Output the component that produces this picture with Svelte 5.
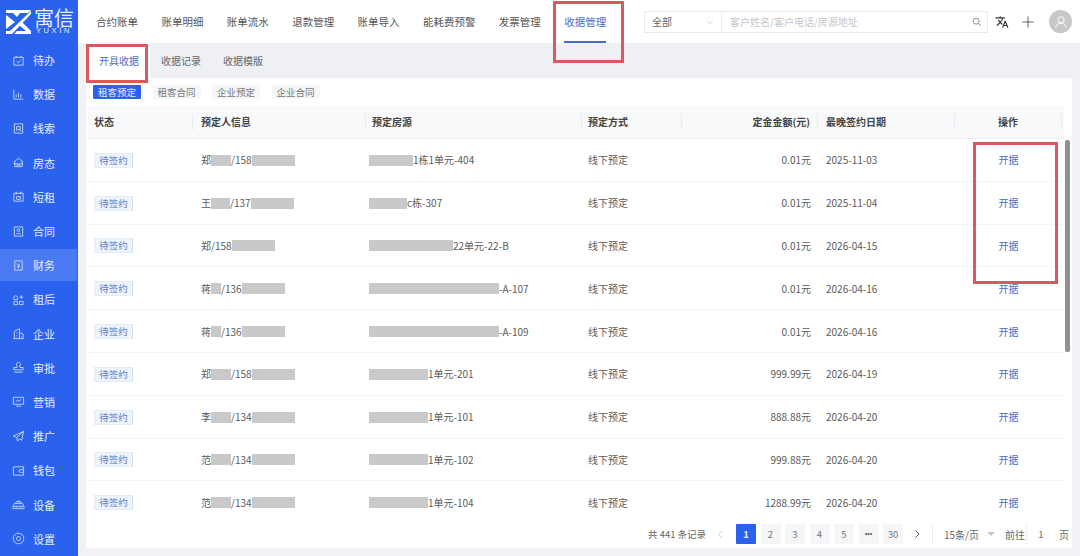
<script lang="ts">
  const icons: Record<string, string> = {
    待办: "M2 3.5h10v8.5H2zM4.5 2v2.5M9.5 2v2.5M5 8l1.6 1.5L9.2 6.8",
    数据: "M2 2v10h10M4.5 10V7M7 10V5M9.5 10V6.5",
    线索: "M2.5 2h9v10h-9zM5 5h4v3H5zM8 9.5h2M4.5 9.5h1",
    房态: "M2 6.5 7 2.5l5 4M3 6v5.5h8V6M2 8.5h10M5.5 11.5v-2h3v2",
    短租: "M2 3.5h10v8.5H2zM4.5 1.8v3M9.5 1.8v3M5 7h4v3H5z",
    合同: "M2.5 2h9v10h-9zM5.5 5.5a1.5 1.5 0 1 0 3 0 1.5 1.5 0 1 0-3 0M4.5 10c.5-1.3 4.5-1.3 5 0",
    财务: "M3 2h8v10H3zM5.5 5 7 6.8 8.5 5M7 6.8V10M5.5 8h3",
    租后: "M2 5a2 2 0 1 1 4 0v2H2zM8 4.5h4M10 2.5v4M2 9h4v3.5H2zM8 9h4v3.5H8z",
    企业: "M2.5 12.5V4.5L8 2v10.5M8 6l4 1.5v5M1.5 12.5h11M5 6v1M5 9v1M10 9.5v1",
    审批: "M7 1.5a2.2 2.2 0 0 1 1.5 3.8V7H12v2.5H2V7h3.5V5.3A2.2 2.2 0 0 1 7 1.5zM2.5 12h9",
    营销: "M1.5 2.5h11v7.5h-11zM4.5 12h5M4 7.5l2-2 1.5 1.2L10 4.5",
    推广: "M12.5 1.5 1.5 6.5l3.5 1.5 1 4 2-2.5 2.5 1.5zM5 8l7.5-6.5",
    钱包: "M1.5 3h11v9h-11zM12.5 6H9a1.5 1.5 0 0 0 0 3h3.5",
    设备: "M1.5 9a5.5 5 0 0 1 11 0zM1 9v2.5h12V9M3.5 6h7M5 3.5h4M4 10.2h1M9 10.2h1",
    设置: "M7 1.3A5.7 5.7 0 1 0 7 12.7 5.7 5.7 0 1 0 7 1.3zM7 4.8a2.2 2.2 0 1 0 0 4.4 2.2 2.2 0 1 0 0-4.4z",
  };
  const navItems = Object.keys(icons);
  const topTabs = ["合约账单", "账单明细", "账单流水", "退款管理", "账单导入", "能耗费预警", "发票管理", "收据管理"];
  const subTabs = ["开具收据", "收据记录", "收据模版"];
  const chips = ["租客预定", "租客合同", "企业预定", "企业合同"];
  const pages = ["1", "2", "3", "4", "5", "•••", "30"];

  const rows = [
    { name: "郑", nameGap: 20, phone: "158", tail: 43, roomGap: 44, room: "1栋1单元-404", amount: "0.01元", date: "2025-11-03" },
    { name: "王", nameGap: 19, phone: "137", tail: 43, roomGap: 38, room: "c栋-307", amount: "0.01元", date: "2025-11-04" },
    { name: "郑", nameGap: 0, phone: "158", tail: 43, roomGap: 84, room: "22单元-22-B", amount: "0.01元", date: "2026-04-15" },
    { name: "蒋", nameGap: 10, phone: "136", tail: 43, roomGap: 130, room: "-A-107", amount: "0.01元", date: "2026-04-16" },
    { name: "蒋", nameGap: 10, phone: "136", tail: 43, roomGap: 130, room: "-A-109", amount: "0.01元", date: "2026-04-16" },
    { name: "郑", nameGap: 20, phone: "158", tail: 43, roomGap: 59, room: "1单元-201", amount: "999.99元", date: "2026-04-19" },
    { name: "李", nameGap: 20, phone: "134", tail: 43, roomGap: 59, room: "1单元-101", amount: "888.88元", date: "2026-04-20" },
    { name: "范", nameGap: 20, phone: "134", tail: 43, roomGap: 59, room: "1单元-102", amount: "999.88元", date: "2026-04-20" },
    { name: "范", nameGap: 20, phone: "134", tail: 43, roomGap: 59, room: "1单元-104", amount: "1288.99元", date: "2026-04-20" },
  ];
</script>

<div class="app">
  <aside class="sidebar">
    <div class="logo">
      <svg class="logo-mark" viewBox="0 0 25 24" width="25" height="24" aria-hidden="true">
        <path fill="#fff" d="M0 0h25l-3 3H14L11 7 7 3H0zM0 5l9 7-9 7zM25 1v3L6 24H0v-3h4zM13 15l3-3 9 9v3H8l3-3h9z" />
      </svg>
      <div class="logo-text">
        <span class="logo-cn">寓信</span>
        <span class="logo-en">YUXIN</span>
      </div>
    </div>
    <nav>
      {#each navItems as item}
        <div class="nav-item" class:active={item === "财务"}>
          <svg viewBox="0 0 14 14" width="13" height="13" aria-hidden="true">
            <path d={icons[item]} />
          </svg>
          <span>{item}</span>
        </div>
      {/each}
    </nav>
  </aside>

  <div class="main">
    <header class="topbar">
      <div class="top-tabs">
        {#each topTabs as tab}
          <span class="top-tab" class:active={tab === "收据管理"}>{tab}</span>
        {/each}
      </div>
      <div class="search">
        <div class="select">
          <span>全部</span>
          <svg viewBox="0 0 10 10" width="8" height="8" aria-hidden="true"><path d="M1.5 3.5 5 7l3.5-3.5" /></svg>
        </div>
        <div class="input">
          <span>客户姓名/客户电话/房源地址</span>
          <svg viewBox="0 0 12 12" width="10" height="10" aria-hidden="true"><circle cx="5" cy="5" r="3.6" /><path d="m7.8 7.8 3 3" /></svg>
        </div>
      </div>
      <svg class="translate" viewBox="0 0 24 24" width="14" height="14" aria-hidden="true">
        <path d="M12.87 15.07l-2.54-2.51.03-.03c1.74-1.94 2.98-4.17 3.71-6.53H17V4h-7V2H8v2H1v1.99h11.17C11.5 7.92 10.44 9.75 9 11.35 8.07 10.32 7.3 9.19 6.69 8h-2c.73 1.63 1.73 3.17 2.98 4.56l-5.09 5.02L4 19l5-5 3.11 3.11.76-2.04zM18.5 10h-2L12 22h2l1.12-3h4.75L21 22h2l-4.5-12zm-2.62 7l1.62-4.33L19.12 17h-3.24z" />
      </svg>
      <svg class="plus" viewBox="0 0 12 12" width="12" height="12" aria-hidden="true"><path d="M6 .5v11M.5 6h11" /></svg>
      <div class="avatar">
        <svg viewBox="0 0 24 24" width="16" height="16" aria-hidden="true">
          <circle cx="12" cy="8.5" r="4.5" /><path d="M4 21c.5-5 4-7 8-7s7.5 2 8 7" />
        </svg>
      </div>
    </header>

    <div class="sub-tabs">
      {#each subTabs as tab, i}
        <span class="sub-tab" class:active={i === 0}>{tab}</span>
      {/each}
    </div>

    <section class="card">
      <div class="chips">
        {#each chips as chip, i}
          <span class="chip" class:active={i === 0}>{chip}</span>
        {/each}
      </div>

      <div class="table-head row-grid">
        <div>状态</div>
        <div>预定人信息</div>
        <div>预定房源</div>
        <div>预定方式</div>
        <div class="num">定金金额(元)</div>
        <div>最晚签约日期</div>
        <div class="center">操作</div>
      </div>

      <div class="table-body">
        {#each rows as row}
          <div class="table-row row-grid">
            <div><span class="tag">待签约</span></div>
            <div class="person">
              {row.name}{#if row.nameGap}<i class="mask" style="width:{row.nameGap}px"></i>{/if}/{row.phone}<i class="mask" style="width:{row.tail}px"></i>
            </div>
            <div class="room"><i class="mask" style="width:{row.roomGap}px"></i>{row.room}</div>
            <div>线下预定</div>
            <div class="num">{row.amount}</div>
            <div>{row.date}</div>
            <div class="center"><span class="link">开据</span></div>
          </div>
        {/each}
      </div>

      <div class="pager">
        <span class="total">共 441 条记录</span>
        <svg class="arrow off" viewBox="0 0 10 10" width="9" height="9" aria-hidden="true"><path d="M6.5 1.5 3 5l3.5 3.5" /></svg>
        <div class="pages">
          {#each pages as p}
            <span class="page" class:active={p === "1"} class:dots={p === "•••"}>{p}</span>
          {/each}
        </div>
        <svg class="arrow" viewBox="0 0 10 10" width="10" height="10" aria-hidden="true"><path d="M3.5 1.5 7 5 3.5 8.5" /></svg>
        <div class="size">
          <span>15条/页</span>
          <i class="caret"></i>
        </div>
        <span class="goto">前往</span>
        <span class="goto-input">1</span>
        <span class="goto-unit">页</span>
      </div>

      <div class="scroll-thumb"></div>
    </section>

    <div class="mark mark-tab"></div>
    <div class="mark mark-top"></div>
    <div class="mark mark-ops"></div>
  </div>
</div>

<style>
  :global(body) {
    margin: 0;
    overflow: hidden;
    font-family: "Noto Sans CJK SC", "Open Sans", sans-serif;
  }

  .app {
    display: flex;
    width: 1080px;
    height: 556px;
    background: #f0f2f6;
    overflow: hidden;
  }

  .sidebar {
    flex: 0 0 78px;
    background: #2a62ee;
    color: #e6edfd;
  }

  .logo {
    display: flex;
    gap: 3px;
    height: 43px;
    padding: 10px 0 0 6px;
    box-sizing: border-box;
  }

  .logo-text {
    display: flex;
    flex-direction: column;
    color: #e9effd;
  }

  .logo-cn {
    font-size: 20px;
    line-height: 16px;
    white-space: nowrap;
  }

  .logo-en {
    font-family: "Liberation Sans", sans-serif;
    font-size: 7.5px;
    line-height: 9px;
    margin-left: 2px;
    letter-spacing: 2.6px;
  }

  .nav-item {
    display: flex;
    align-items: center;
    gap: 8px;
    height: 34.2px;
    padding-left: 12px;
    font-size: 11px;
    box-sizing: border-box;
  }

  .nav-item.active {
    background: linear-gradient(#4a7af2, #4a7af2) 0 60% / 100% 32px no-repeat;
    margin-right: 1px;
  }

  .nav-item svg path {
    fill: none;
    stroke: #d6e1fb;
    stroke-width: 0.9;
  }

  .main {
    position: relative;
    flex: 1;
    min-width: 0;
    display: flex;
    flex-direction: column;
  }

  .topbar {
    display: flex;
    align-items: center;
    height: 43px;
    flex: none;
    background: #fff;
  }

  .top-tabs {
    display: flex;
    gap: 23.4px;
    height: 100%;
    padding-left: 18px;
    width: 566px;
    box-sizing: border-box;
  }

  .top-tab {
    position: relative;
    font-size: 10.5px;
    line-height: 43px;
    color: #555;
    white-space: nowrap;
  }

  .top-tab.active {
    color: #4a6cc4;
    box-shadow: inset 0 -2px 0 #4a6cc4;
  }

  .search {
    display: flex;
    width: 344px;
    height: 22px;
    border: 1px solid #e8eaee;
    box-sizing: border-box;
    font-size: 10px;
  }

  .select {
    display: flex;
    align-items: center;
    justify-content: space-between;
    width: 77px;
    padding: 0 7px;
    box-sizing: border-box;
    color: #666;
    border-right: 1px solid #eceef1;
  }

  .select svg path {
    fill: none;
    stroke: #c4c7cc;
  }

  .input {
    flex: 1;
    display: flex;
    align-items: center;
    justify-content: space-between;
    padding: 0 5px 0 8px;
    color: #c3c6cc;
  }

  .input svg {
    fill: none;
    stroke: #777;
  }

  .translate {
    margin-left: 7px;
    fill: #333;
  }

  .plus {
    margin-left: 13px;
    fill: none;
    stroke: #555;
    stroke-width: 0.9;
  }

  .avatar {
    width: 23px;
    height: 23px;
    margin-left: 15px;
    display: flex;
    align-items: center;
    justify-content: center;
    border-radius: 50%;
    background: #c8c8c8;
  }

  .avatar svg {
    fill: none;
    stroke: #f4f4f4;
    stroke-width: 1.6;
  }

  .sub-tabs {
    display: flex;
    flex: none;
    height: 35px;
    padding-left: 10px;
    background: #eff0f4;
  }

  .sub-tab {
    width: 62px;
    text-align: center;
    font-size: 10px;
    line-height: 36px;
    color: #666;
  }

  .sub-tab.active {
    color: #4a6cc4;
    background: #fff;
  }

  .card {
    position: relative;
    display: flex;
    flex-direction: column;
    width: 986px;
    height: 470px;
    margin-left: 8px;
    background: #fff;
  }

  .chips {
    display: flex;
    flex: none;
    gap: 11.5px;
    padding: 7px 0 7px 7px;
  }

  .chip {
    height: 14px;
    padding: 0 5px;
    font-size: 9.5px;
    line-height: 14px;
    color: #777;
    background: #f5f6f7;
    border-radius: 1px;
  }

  .chip.active {
    color: #e4ecfd;
    background: #2a62ee;
  }

  .row-grid {
    display: grid;
    grid-template-columns: 105px 173px 216px 100px 136px 137px 107px;
    margin-left: 2px;
    width: 976px;
    align-items: center;
    font-size: 10px;
  }

  .table-head {
    flex: none;
    height: 33px;
    box-sizing: border-box;
    background: #f7f9fb;
    border-bottom: 1px solid #eceef2;
    font-weight: 700;
    color: #444;
  }

  .table-head > div {
    height: 16px;
    line-height: 16px;
    padding-left: 6px;
    border-right: 1px solid #e9ebef;
    box-sizing: border-box;
  }

  .table-head > div:nth-child(2),
  .table-head > div:nth-child(6) {
    padding-left: 8px;
  }

  .table-head > .num,
  .table-row > .num {
    text-align: right;
    padding-right: 7px;
    padding-left: 0;
  }

  .table-head > .center,
  .table-row > .center {
    text-align: center;
    padding-left: 0;
  }

  .table-body {
    flex: 1;
    min-height: 0;
    overflow: hidden;
  }

  .table-row {
    height: 42.8px;
    box-sizing: border-box;
    border-bottom: 1px solid #f4f5f7;
    color: #5a5a5a;
  }

  .table-row > div {
    display: block;
    padding-left: 8px;
    white-space: nowrap;
    box-sizing: border-box;
  }

  .table-row > div:nth-child(1) {
    padding-left: 6px;
  }

  .table-row > div:nth-child(3) {
    padding-left: 3px;
  }

  .table-row > div:nth-child(4) {
    padding-left: 6px;
  }

  .mask {
    display: inline-block;
    height: 11px;
    background: #c9c9c9;
    vertical-align: -1.5px;
  }

  .tag {
    display: inline-block;
    width: 39px;
    height: 15px;
    box-sizing: border-box;
    text-align: center;
    font-size: 9.5px;
    line-height: 13px;
    color: #5f7fc9;
    background: #eef4fb;
    border: 1px solid #e4ecf6;
    border-right-color: #cfdcec;
  }

  .link {
    color: #4a6cc4;
  }

  .pager {
    display: flex;
    align-items: center;
    flex: none;
    height: 28px;
    font-size: 9.5px;
    color: #666;
    padding-left: 562px;
  }

  .total {
    width: 68px;
    white-space: nowrap;
  }

  .arrow {
    fill: none;
    stroke: #555;
    stroke-width: 1;
  }

  .arrow.off {
    stroke: #c0c4cc;
    margin-right: 11px;
  }

  .pages {
    display: flex;
    gap: 4.5px;
    margin-right: 9px;
  }

  .page {
    width: 20px;
    height: 20px;
    line-height: 20px;
    text-align: center;
    background: #f5f6f7;
    border-radius: 1px;
    color: #777;
  }

  .page.active {
    color: #e4ecfd;
    background: #2a62ee;
    font-weight: 700;
  }

  .page.dots {
    font-family: "Liberation Sans", sans-serif;
    font-size: 7px;
    color: #555;
  }

  .size {
    display: flex;
    align-items: center;
    justify-content: space-between;
    width: 62px;
    height: 20px;
    margin-left: 10px;
    padding: 0 0 0 11px;
    box-sizing: border-box;
    border-left: 1px solid #ececef;
    font-size: 10px;
    white-space: nowrap;
  }

  .caret {
    width: 0;
    height: 0;
    margin-right: -1px;
    border: 4px solid transparent;
    border-top: 4px solid #c4c7cc;
    border-bottom: 0;
  }

  .goto {
    margin-left: 11px;
    font-size: 10px;
    white-space: nowrap;
  }

  .goto-input {
    width: 28px;
    text-align: center;
    border-left: 1px solid #f0f1f3;
    margin-left: 1px;
    line-height: 20px;
  }

  .goto-unit {
    margin-left: 4px;
    font-size: 10px;
  }

  .scroll-thumb {
    position: absolute;
    top: 62px;
    left: 979px;
    width: 5px;
    height: 212px;
    border-radius: 2px;
    background: #909090;
  }

  .mark {
    position: absolute;
    box-sizing: border-box;
    border: 3px solid #d8595f;
    pointer-events: none;
  }

  .mark-tab {
    left: 8px;
    top: 44px;
    width: 62px;
    height: 39px;
  }

  .mark-top {
    left: 475px;
    top: 1px;
    width: 71px;
    height: 62px;
  }

  .mark-ops {
    left: 895px;
    top: 142px;
    width: 85px;
    height: 142px;
  }
</style>
